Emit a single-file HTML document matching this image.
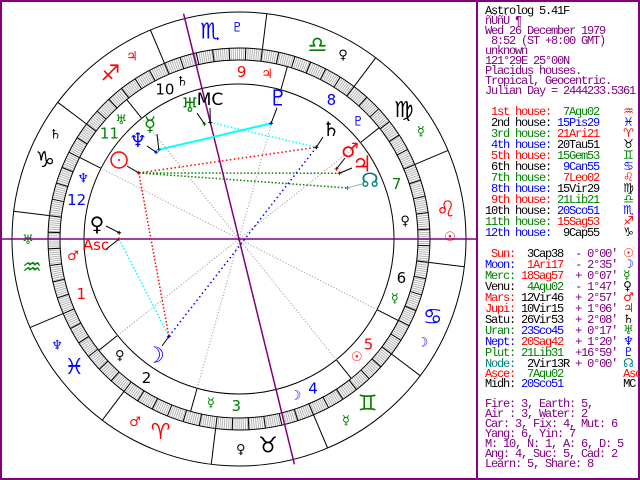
<!DOCTYPE html>
<html><head><meta charset="utf-8">
<style>
html,body{margin:0;padding:0;background:#fff;}
#w{position:relative;width:640px;height:480px;overflow:hidden;background:#fff;}
#frame{position:absolute;left:0;top:0;width:636px;height:476px;border:2px solid #800080;}
#div{position:absolute;left:476px;top:0;width:2px;height:480px;background:#800080;}
pre{position:absolute;left:485px;top:6px;margin:0;font-family:"Liberation Mono",monospace;font-size:12px;letter-spacing:-1.2px;line-height:10px;color:#000;}
.p{color:#800080}.r{color:#f00}.g{color:#008000}.b{color:#00f}.k{color:#000}.t{color:#008080}
.gl{font-family:"DejaVu Sans",sans-serif;letter-spacing:0;font-size:12px;}
svg{position:absolute;left:0;top:0;}
svg text{font-family:"DejaVu Sans",sans-serif;}
</style></head><body><div id="w">
<svg id="s" width="640" height="480" viewBox="0 0 640 480"></svg>
<div id="frame"></div><div id="div"></div>
<pre>Astrolog 5.41F
<span class="p">ñÚñÙ ¶
Wed 26 December 1979
 8:52 (ST +8:00 GMT)
unknown
121°29E 25°00N
Placidus houses.
Tropical, Geocentric.
Julian Day = 2444233.5361</span>

<span class="r"> 1st house:</span>  <span class="g">7Aqu02</span>    <span class="gl r">♒</span>
<span class="k"> 2nd house:</span> <span class="b">15Pis29</span>    <span class="gl b">♓</span>
<span class="g"> 3rd house:</span> <span class="r">21Ari21</span>    <span class="gl r">♈</span>
<span class="b"> 4th house:</span> <span class="k">20Tau51</span>    <span class="gl k">♉</span>
<span class="r"> 5th house:</span> <span class="g">15Gem53</span>    <span class="gl g">♊</span>
<span class="k"> 6th house:</span>  <span class="b">9Can55</span>    <span class="gl b">♋</span>
<span class="g"> 7th house:</span>  <span class="r">7Leo02</span>    <span class="gl r">♌</span>
<span class="b"> 8th house:</span> <span class="k">15Vir29</span>    <span class="gl k">♍</span>
<span class="r"> 9th house:</span> <span class="g">21Lib21</span>    <span class="gl g">♎</span>
<span class="k">10th house:</span> <span class="b">20Sco51</span>    <span class="gl b">♏</span>
<span class="g">11th house:</span> <span class="r">15Sag53</span>    <span class="gl r">♐</span>
<span class="b">12th house:</span>  <span class="k">9Cap55</span>    <span class="gl k">♑</span>

<span class="r"> Sun:</span>  <span class="k">3Cap38</span>  <span class="p">- 0°00'</span> <span class="gl r">☉</span>
<span class="b">Moon:</span>  <span class="r">1Ari17</span>  <span class="p">- 2°35'</span> <span class="gl b">☽</span>
<span class="g">Merc:</span> <span class="r">18Sag57</span>  <span class="p">+ 0°07'</span> <span class="gl g">☿</span>
<span class="k">Venu:</span>  <span class="g">4Aqu02</span>  <span class="p">- 1°47'</span> <span class="gl k">♀</span>
<span class="r">Mars:</span> <span class="k">12Vir46</span>  <span class="p">+ 2°57'</span> <span class="gl r">♂</span>
<span class="r">Jupi:</span> <span class="k">10Vir15</span>  <span class="p">+ 1°06'</span> <span class="gl r">♃</span>
<span class="k">Satu:</span> <span class="k">26Vir53</span>  <span class="p">+ 2°08'</span> <span class="gl k">♄</span>
<span class="g">Uran:</span> <span class="b">23Sco45</span>  <span class="p">+ 0°17'</span> <span class="gl g">♅</span>
<span class="b">Nept:</span> <span class="r">20Sag42</span>  <span class="p">+ 1°20'</span> <span class="gl b">♆</span>
<span class="g">Plut:</span> <span class="g">21Lib31</span>  <span class="p">+16°59'</span> <span class="gl b">♇</span>
<span class="t">Node:</span>  <span class="k">2Vir13R</span> <span class="p">+ 0°00'</span> <span class="gl t">☊</span>
<span class="r">Asce:</span>  <span class="g">7Aqu02</span>          <span class="r">Asc</span>
<span class="k">Midh:</span> <span class="b">20Sco51</span>          <span class="k">MC</span>

<span class="p">Fire: 3, Earth: 5,
Air : 3, Water: 2
Car: 3, Fix: 4, Mut: 6
Yang: 6, Yin: 7
M: 10, N: 1, A: 6, D: 5
Ang: 4, Suc: 5, Cad: 2
Learn: 5, Share: 8</span></pre>
</div>
<script>
(function(){
var s=document.getElementById('s'),NS='http://www.w3.org/2000/svg',C=239;
function P(L,r){var t=(L-127.03)*Math.PI/180;return [C+r*Math.cos(t),C-r*Math.sin(t)];}
function el(n,a,txt){var e=document.createElementNS(NS,n);for(var k in a)e.setAttribute(k,a[k]);if(txt!=null)e.textContent=txt;s.appendChild(e);return e;}
function line(a,b,c,w,d){var o={x1:a[0],y1:a[1],x2:b[0],y2:b[1],stroke:c,'stroke-width':w||1};if(d)o['stroke-dasharray']=d;el('line',o);}
function txt(p,t,c,fs){el('text',{x:p[0],y:p[1],fill:c,'font-size':fs,'text-anchor':'middle','dominant-baseline':'central'},t);}
var R='#f00',G='#008000',B='#00f',K='#000',T='#008080',PU='#800080',GR='#a8a8a8';
var EC=[R,K,G,B];
el('circle',{cx:C,cy:C,r:185,fill:'none',stroke:'#b4b4b4','stroke-width':12,'stroke-dasharray':'1 1.1'});
[227,191,179,155].forEach(function(r){el('circle',{cx:C,cy:C,r:r,fill:'none',stroke:K,'stroke-width':1});});
for(var L=0;L<360;L+=5)line(P(L,179),P(L,191),K,1);
var signs='♈♉♊♋♌♍♎♏♐♑♒♓',rul='♂♀☿☽☉☿♀♇♃♄♅♆',rulc=[R,K,G,B,R,G,K,B,R,K,G,B];
for(var k=0;k<12;k++){
 line(P(30*k,191),P(30*k,227),K,1);
 txt(P(30*k+15,209),signs[k],EC[k%4],22);
 txt(P(30*k+7.5,211),rul[k],rulc[k],13);
}
var cusp=[307.03,345.48,21.35,50.85,75.88,99.92,127.03,165.48,201.35,230.85,255.88,279.92];
var hr='♂♀☿☽☉☿♀♇♃♄♅♆',hc=[R,K,G,B,R,G,K,B,R,K,G,B];
for(var h=0;h<12;h++){
 var a=cusp[h],b=cusp[(h+1)%12];if(b<a)b+=360;
 line(P(a,155),P(a,179),K,1);
 if(h%3!=0)line(P(a,155),P(a+180,155),GR,1,'1 2');
 txt(P((a+b)/2,167),String(h+1),EC[h%4],15);
 txt(P(a+6,167),hr[h],hc[h],13);
}
el('line',{x1:2,y1:C,x2:476,y2:C,stroke:PU,'stroke-width':1.5});
line(P(230.85,232),P(50.85,232),PU,1.5);
var pts={Sun:273.63,Moon:1.28,Merc:258.95,Venu:304.03,Mars:162.77,Jupi:160.25,Satu:176.88,Uran:233.75,Nept:260.7,Plut:201.52,Node:152.22,Asc:307.03,MC:230.85};
var pc={Sun:R,Moon:B,Merc:G,Venu:K,Mars:R,Jupi:R,Satu:K,Uran:G,Nept:B,Plut:B,Node:T,Asc:R,MC:K};
var q={};for(var n in pts)q[n]=P(pts[n],120);
line(q.Merc,q.Plut,'#00ffff',2);
line(q.MC,q.Satu,'#00ffff',1.5,'1.5 2');
line(q.Sun,q.Satu,R,1.5,'1.5 2.5');
line(q.Sun,q.Jupi,G,1.5,'1.5 2');
line(q.Sun,q.Node,G,1.5,'1.5 2');
line(q.Sun,q.Moon,R,1.5,'1.5 2');
line(q.Asc,q.Moon,'#00ffff',1.5,'1.5 2');
line(q.Moon,q.Satu,B,1.5,'1.5 3');
for(var n in q){var p=q[n];line([p[0]-2,p[1]],[p[0]+2,p[1]],pc[n],1);line([p[0],p[1]-2],[p[0],p[1]+2],pc[n],1);}
[[127,166,'Sun'],[147,146,'Nept'],[157,134,'Merc'],[197,113,'Uran'],[210,108,'MC'],[277,108,'Plut'],[323,137,'Satu'],[345,158,'Mars'],[352,168,'Jupi'],[106,226,'Venu'],[105,250,'Asc'],[162,346,'Moon']].forEach(function(a){line([a[0],a[1]],q[a[2]],K,1);});
line([362,184],q.Node,GR,1);
el('circle',{cx:119,cy:160,r:8,fill:'none',stroke:R,'stroke-width':1.5});
el('circle',{cx:119,cy:160,r:1,fill:R});
txt([150,124],'☿',G,20);txt([138,140],'♆',B,20);txt([190,105],'♅',G,20);
txt([210,100],'MC',K,17);txt([278,99],'♇',B,22);txt([331,129],'♄',K,20);
txt([350,150],'♂',R,20);txt([362,165],'♃',R,22);txt([370,180],'☊',T,20);
txt([97,224],'♀',K,20);txt([96,245],'Asc',R,15);txt([155,356],'☽',B,22);
})();
</script>
</body></html>
